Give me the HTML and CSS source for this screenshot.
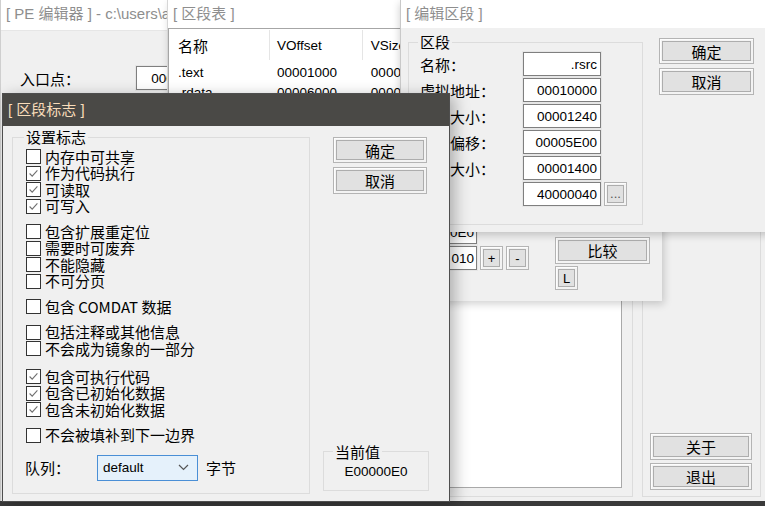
FILE: index.html
```html
<!DOCTYPE html>
<html lang="zh-CN">
<head>
  <meta charset="UTF-8">
  <meta name="viewport" content="width=device-width, initial-scale=1.0">
  <title>PE 编辑器</title>
  <link rel="stylesheet" href="styles.css">
</head>
<body>
<div class="desktop">

  <!-- 主窗口 -->
  <section class="win main-win">
    <div class="titlebar main-title">[ PE 编辑器 ] - c:\users\admin\desktop\test.exe</div>
    <div class="main-body">
      <div class="main-left">
        <div class="entry-row">
          <span class="entry-lbl">入口点：</span>
          <span class="field num center">000013B0</span>
        </div>
        <div class="frame"><div class="listbox"></div></div>
      </div>
      <div class="side-panel">
        <button class="btn side-btn">关于</button>
        <button class="btn side-btn">退出</button>
      </div>
    </div>
  </section>

  <!-- 区段表 -->
  <section class="win table-win">
    <div class="titlebar">[ 区段表 ]</div>
    <div class="tbl-body">
      <div class="listview">
        <div class="lv-head"><span class="c1">名称</span><span class="c2 num">VOffset</span><span class="c3 num">VSize</span></div>
        <div class="lv-row"><span class="c1 num">.text</span><span class="c2 num">00001000</span><span class="c3 num">00004A10</span></div>
        <div class="lv-row"><span class="c1 num">.rdata</span><span class="c2 num">00006000</span><span class="c3 num">00002C4E</span></div>
        <div class="lv-row"><span class="c1 num">.data</span><span class="c2 num">00009000</span><span class="c3 num">00001B80</span></div>
        <div class="lv-row"><span class="c1 num">.rsrc</span><span class="c2 num">00010000</span><span class="c3 num">00001240</span></div>
      </div>
      <div class="tbl-side">
        <div class="fields">
          <div class="fld-row"><span class="field num">0E0</span></div>
          <div class="fld-row">
            <span class="field num">010</span>
            <button class="btn small">+</button>
            <button class="btn small">-</button>
          </div>
        </div>
        <div class="cmp">
          <button class="btn cmp-btn">比较</button>
          <button class="btn small l-btn">L</button>
        </div>
      </div>
    </div>
  </section>

  <!-- 编辑区段 -->
  <section class="win edit-win">
    <div class="titlebar">[ 编辑区段 ]</div>
    <div class="edit-body">
      <fieldset class="group sect-set">
        <legend>区段</legend>
        <div class="form-row"><label>名称：</label><span class="field num">.rsrc</span></div>
        <div class="form-row"><label>虚拟地址：</label><span class="field num">00010000</span></div>
        <div class="form-row"><label>虚拟大小：</label><span class="field num">00001240</span></div>
        <div class="form-row"><label>文件偏移：</label><span class="field num">00005E00</span></div>
        <div class="form-row"><label>文件大小：</label><span class="field num">00001400</span></div>
        <div class="form-row"><label></label><span class="field num">40000040</span><button class="btn small dots">...</button></div>
      </fieldset>
      <div class="dlg-btns">
        <button class="btn dlg-btn">确定</button>
        <button class="btn dlg-btn">取消</button>
      </div>
    </div>
  </section>

  <!-- 区段标志 -->
  <section class="win flags-win">
    <div class="titlebar dark">[ 区段标志 ]</div>
    <div class="flags-body">
      <fieldset class="group flags-set">
        <legend>设置标志</legend>
        <div class="chk-group">
          <div class="chk"><span class="box"></span>内存中可共享</div>
          <div class="chk"><span class="box"><svg viewBox="0 0 15 15"><path d="M3 7.5l3 3 6-6.5"/></svg></span>作为代码执行</div>
          <div class="chk"><span class="box"><svg viewBox="0 0 15 15"><path d="M3 7.5l3 3 6-6.5"/></svg></span>可读取</div>
          <div class="chk"><span class="box"><svg viewBox="0 0 15 15"><path d="M3 7.5l3 3 6-6.5"/></svg></span>可写入</div>
        </div>
        <div class="chk-group">
          <div class="chk"><span class="box"></span>包含扩展重定位</div>
          <div class="chk"><span class="box"></span>需要时可废弃</div>
          <div class="chk"><span class="box"></span>不能隐藏</div>
          <div class="chk"><span class="box"></span>不可分页</div>
        </div>
        <div class="chk-group">
          <div class="chk"><span class="box"></span>包含 COMDAT 数据</div>
        </div>
        <div class="chk-group">
          <div class="chk"><span class="box"></span>包括注释或其他信息</div>
          <div class="chk"><span class="box"></span>不会成为镜象的一部分</div>
        </div>
        <div class="chk-group wide">
          <div class="chk"><span class="box"><svg viewBox="0 0 15 15"><path d="M3 7.5l3 3 6-6.5"/></svg></span>包含可执行代码</div>
          <div class="chk"><span class="box"><svg viewBox="0 0 15 15"><path d="M3 7.5l3 3 6-6.5"/></svg></span>包含已初始化数据</div>
          <div class="chk"><span class="box"><svg viewBox="0 0 15 15"><path d="M3 7.5l3 3 6-6.5"/></svg></span>包含未初始化数据</div>
        </div>
        <div class="chk-group">
          <div class="chk"><span class="box"></span>不会被填补到下一边界</div>
        </div>
        <div class="queue-row">
          <span class="queue-lbl">队列：</span>
          <span class="select"><span class="num">default</span><svg viewBox="0 0 11 7"><path d="M1 1l4.5 4.5L10 1"/></svg></span>
          <span class="unit">字节</span>
        </div>
      </fieldset>
      <div class="flags-side">
        <button class="btn dlg-btn">确定</button>
        <button class="btn dlg-btn">取消</button>
        <fieldset class="group cur-set">
          <legend>当前值</legend>
          <div class="cur-val num">E00000E0</div>
        </fieldset>
      </div>
    </div>
  </section>

</div>
</body>
</html>
```

FILE: styles.css
```css
*{  box-sizing: border-box;  }
html, body{  margin: 0;  padding: 0;  width: 100%;  height: 100%;  }
body{
  background: #3a3a3a;  overflow: hidden;  color: #000;
  font-family: "Noto Sans CJK SC", "Liberation Sans", sans-serif;  font-size: 15px;
}
.num{  font-family: "Liberation Sans", "Noto Sans CJK SC", sans-serif;  font-size: 13.5px;  }
.desktop{  position: relative;  width: 765px;  height: 506px;  overflow: hidden;  }

/* windows on the desktop */
.win{  position: absolute;  background: #f0f0f0;  display: flex;  flex-direction: column;  }
.titlebar{
  flex: none;  height: 28px;  line-height: 28px;  padding-left: 5px;
  font-family: "Liberation Sans", "Noto Sans CJK SC", sans-serif;
  background: #fff;  color: #8e8e8e;  font-size: 15px;  white-space: nowrap;  overflow: hidden;
}
.titlebar.dark{  height: 32px;  line-height: 32px;  background: #4a4946;  color: #f8dcba;  }

/* common controls */
.btn{
  font: inherit;  font-size: 15px;  line-height: 1;  color: #000;  padding: 0;
  display: flex;  align-items: center;  justify-content: center;
  background: #e1e1e1;  border: 1px solid #b4b4b4;
  box-shadow: inset 1px 1px 0 #fdfdfd, inset 0 0 0 2px #f3f3f3, inset 0 0 0 3px #adadad;
}
.btn.small{  font-family: "Liberation Sans", sans-serif;  font-size: 13px;  width: 23px;  height: 24px;  }
.field{
  display: flex;  align-items: center;  justify-content: flex-end;  overflow: hidden;  white-space: nowrap;
  height: 24px;  padding: 0 3px;  background: #fff;
  border: 1px solid #7f7f7f;  box-shadow: 0 0 0 1px #e6e6e6;
}
.field.center{  justify-content: center;  }
.group{  margin: 0;  border: 1px solid #dcdcdc;  min-width: 0;  }
.group > legend{  padding: 0 2px;  margin-left: -2px;  line-height: 18px;  font-size: 15px;  }

/* 主窗口 */
.main-win{  left: 0;  top: 0;  width: 780px;  height: 501px;  border-left: 1px solid #cfcfcf;  z-index: 1;  }
.main-title{  height: 31px;  padding-bottom: 3px;  padding-left: 5px;  border-bottom: 1px solid #e6e6e6;  }
.main-body{  flex: 1;  display: flex;  padding: 7px 0 4px 9px;  }
.main-left{  width: 623px;  display: flex;  flex-direction: column;  }
.entry-row{  display: flex;  align-items: center;  height: 24px;  margin-top: 28px;  padding-left: 10px;  }
.entry-lbl{  width: 116px;  }
.entry-row .field{  width: 92px;  }
.frame{  flex: 1;  margin-top: 10px;  border: 1px solid #dcdcdc;  display: flex;  padding: 10px 10px 8px 10px;  }
.listbox{  flex: 1;  background: #fff;  border: 1px solid #a9a9a9;  }
.side-panel{
  width: 119px;  margin-left: 9px;  border: 1px solid #dcdcdc;
  display: flex;  flex-direction: column;  justify-content: flex-end;  gap: 3px;  padding: 0 0 6px 7px;
}
.side-btn{  width: 102px;  height: 27px;  }

/* 区段表 */
.table-win{
  left: 167px;  top: 0;  width: 495px;  height: 301px;  z-index: 2;
  border-left: 1px solid #d6d6d6;  box-shadow: 2px 3px 8px rgba(0,0,0,.18);
}
.tbl-body{  flex: 1;  display: flex;  padding: 0 12px 11px 0;  }
.listview{  width: 274px;  background: #fff;  border-top: 1px solid #a6a6a6;  border-left: 1px solid #a6a6a6;  }
.lv-head, .lv-row{  display: flex;  white-space: nowrap;  }
.lv-head{  height: 31px;  align-items: center;  padding-top: 1px;  }
.lv-head > span{  height: 100%;  display: flex;  align-items: center;  border-right: 1px solid #e5e5e5;  }
.lv-head .c1{  font-size: 15px;  }
.lv-row{  height: 20px;  align-items: center;  }
.lv-head + .lv-row{  margin-top: 2px;  }
.c1{  width: 102px;  padding-left: 9px;  }
.c2{  width: 94px;  padding-left: 7px;  }
.c3{  width: 80px;  padding-left: 8px;  }
.tbl-side{  flex: 1;  display: flex;  align-items: flex-end;  padding-left: 4px;  }
.fields{  display: flex;  flex-direction: column;  gap: 2px;  padding-bottom: 20px;  }
.fld-row{  display: flex;  align-items: center;  gap: 3px;  }
.fld-row .field{  width: 31px;  padding: 0 2px 0 0;  }
.cmp{  margin-left: auto;  width: 95px;  display: flex;  flex-direction: column;  gap: 2px;  }
.cmp-btn{  height: 27px;  }
.l-btn{  width: 24px;  height: 25px;  font-size: 14px;  }

/* 编辑区段 */
.edit-win{
  left: 400px;  top: 0;  width: 380px;  height: 232px;  z-index: 3;
  border-left: 1px solid #c9c9c9;  box-shadow: 0 3px 8px rgba(0,0,0,.2);
}
.edit-body{  flex: 1;  display: flex;  align-items: flex-start;  padding: 5px 0 0 7px;  }
.sect-set{  width: 235px;  padding: 1px 0 18px 11px;  display: flex;  flex-direction: column;  gap: 2px;  }
.form-row{  display: flex;  align-items: center;  height: 24px;  }
.form-row label{  width: 103px;  white-space: nowrap;  }
.form-row .field{  width: 78px;  }
.dots{  margin-left: 3px;  width: 24px;  height: 24px;  align-items: flex-end;  padding-bottom: 5px;  font-size: 11px;  color: #555;  }
.dlg-btns{  margin-left: 16px;  margin-top: 5px;  display: flex;  flex-direction: column;  gap: 4px;  }
.dlg-btn{  width: 95px;  height: 26px;  }
.dlg-btn + .dlg-btn{  height: 27px;  }

/* 区段标志 */
.flags-win{
  left: 2px;  top: 93px;  width: 448px;  height: 409px;  z-index: 4;
  border: 1px solid #4e4e4e;  box-shadow: 5px 3px 14px rgba(0,0,0,.28);
}
.flags-body{  flex: 1;  display: flex;  padding: 2px 0 8px 9px;  }
.flags-set{  width: 298px;  padding: 2.5px 0 12px 13px;  }
.chk-group + .chk-group{  margin-top: 9px;  }
.chk-group.wide{  margin-top: 11.5px;  }
.chk{  display: flex;  align-items: center;  gap: 4px;  height: 16.5px;  line-height: 16px;  white-space: nowrap;  }
.box{  flex: none;  width: 15px;  height: 15px;  background: #fff;  border: 1px solid #333;  display: flex;  }
.box svg{  width: 13px;  height: 13px;  fill: none;  stroke: #707070;  stroke-width: 1.3;  }
.queue-row{  display: flex;  align-items: center;  height: 26px;  margin-top: 11px;  }
.queue-lbl{  width: 72px;  margin-left: -1px;  }
.select{
  width: 101px;  height: 26px;  display: flex;  align-items: center;  justify-content: space-between;
  padding: 0 8px 0 5px;  background: #e5f1fb;  border: 1px solid #4a8fd6;
}
.select svg{  width: 11px;  height: 7px;  fill: none;  stroke: #555;  stroke-width: 1.2;  }
.unit{  margin-left: 8px;  }
.flags-side{  margin-left: 13px;  width: 106px;  display: flex;  flex-direction: column;  padding-bottom: 3px;  }
.flags-side .dlg-btn{  width: 94px;  margin-left: 10px;  }
.flags-side .dlg-btn:first-child{  margin-top: 9px;  }
.flags-side .dlg-btn + .dlg-btn{  margin-top: 4px;  }
.cur-set{  margin-top: auto;  width: 106px;  padding: 0 0 8px 11px;  }
.cur-val{  line-height: 21px;  text-align: center;  margin-left: -11px;  }
```
